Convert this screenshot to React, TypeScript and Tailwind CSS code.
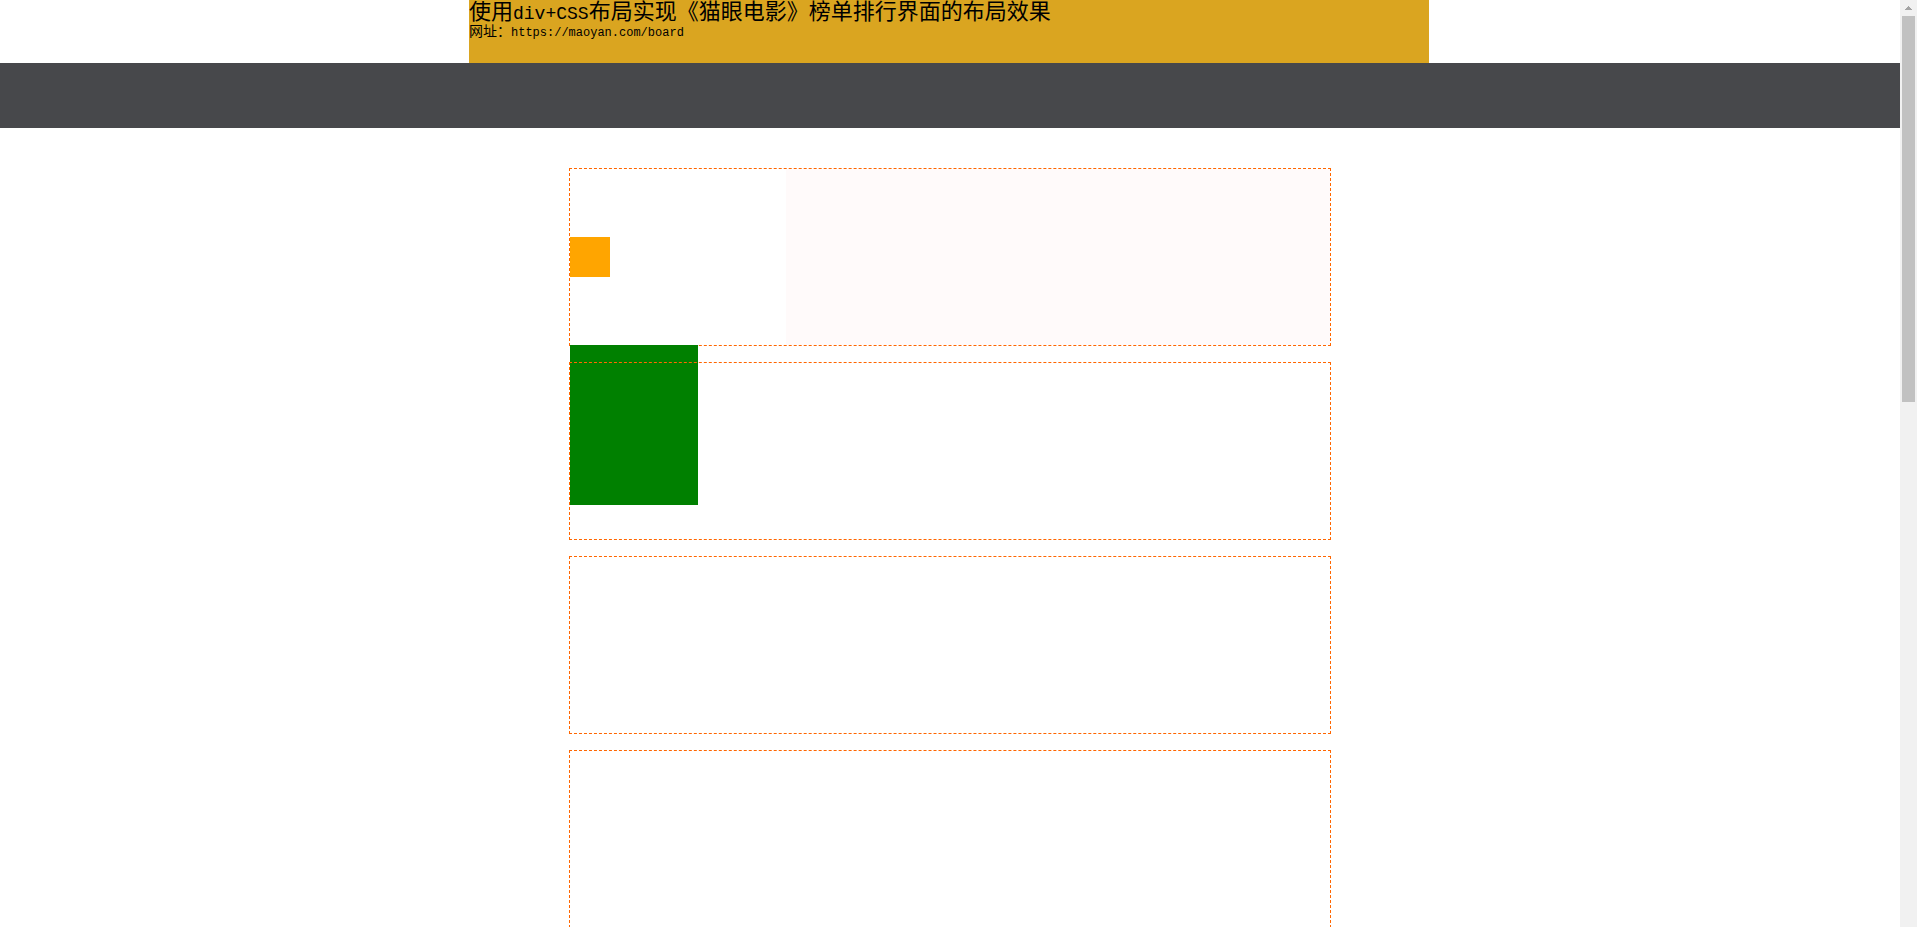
const movies = Array.from({ length: 10 }, (_, i) => i + 1);

function PageHeader() {
  return (
    <div className="flex justify-center pr-0.5">
      <header className="h-[63px] w-full max-w-[960px] bg-[#daa520] text-black">
        <h1 className="text-[22px] leading-6 font-normal whitespace-nowrap">
          使用<span className="font-['Liberation_Mono',monospace] text-lg leading-5">div+CSS</span>
          布局实现《猫眼电影》榜单排行界面的布局效果
        </h1>
        <p className="text-sm leading-4 whitespace-nowrap">
          网址：
          <a href="https://maoyan.com/board" className="font-['Liberation_Mono',monospace] text-xs leading-4">
            https://maoyan.com/board
          </a>
        </p>
      </header>
    </div>
  );
}

function MovieCard({ first }: { first: boolean }) {
  return (
    <li className="h-[178px] w-full max-w-[762px] border border-dashed border-[#ff6600]">
      {first && (
        <>
          <div className="flex h-44">
            <div className="flex w-[216px] items-center">
              <div className="size-10 bg-[#ffa500]" />
            </div>
            <div className="flex-1 bg-[#fffafa]" />
          </div>
          <div className="h-40 w-32 bg-[#008000]" />
        </>
      )}
    </li>
  );
}

function ScrollBar() {
  return (
    <div aria-hidden="true" className="flex w-[17px] shrink-0 flex-col items-center bg-[#f1f1f1]">
      <svg width="17" height="16" viewBox="0 0 17 16" shapeRendering="crispEdges" className="shrink-0">
        <path d="M8 6h1v1h1v1h1v1h1v1H5V9h1V8h1V7h1z" fill="#a3a3a3" />
      </svg>
      <div className="h-[386px] w-[13px] bg-[#c1c1c1]" />
    </div>
  );
}

export default function App() {
  return (
    <div className="flex h-screen overflow-hidden bg-white font-['Liberation_Serif','Noto_Sans_CJK_SC',serif]">
      <div className="min-w-0 flex-1 overflow-hidden">
        <PageHeader />
        <nav className="h-[65px] bg-[#47484b]" />
        <main className="pt-10">
          <ul className="flex flex-col items-center gap-4">
            {movies.map((rank) => (
              <MovieCard key={rank} first={rank === 1} />
            ))}
          </ul>
        </main>
      </div>
      <ScrollBar />
    </div>
  );
}
